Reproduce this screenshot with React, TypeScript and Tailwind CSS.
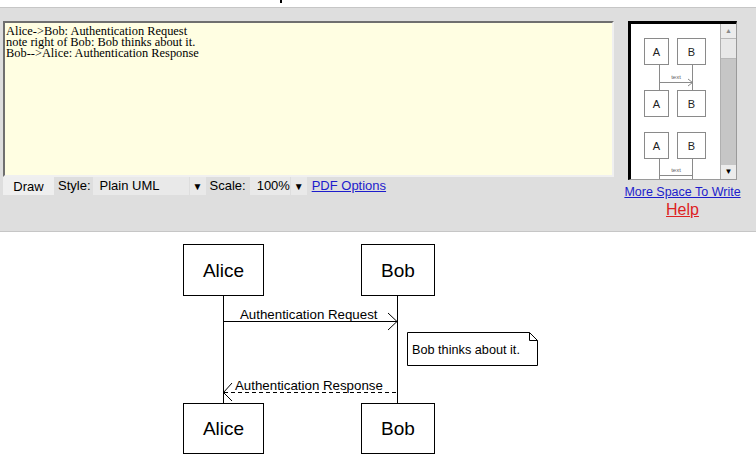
import React from 'react';

const source = `Alice->Bob: Authentication Request
note right of Bob: Bob thinks about it.
Bob-->Alice: Authentication Response`;

const Thumbnail: React.FC = () => (
    <svg width="88" height="156" viewBox="0 0 88 156" className="block">
        <rect x="0" y="0" width="88" height="156" fill="#ffffff"/>
        <g stroke="#8a8a8a" strokeWidth="1" fill="#ffffff">
            <rect x="13.5" y="14.5" width="24" height="26"/>
            <rect x="46.5" y="14.5" width="28" height="26"/>
            <line x1="28.5" y1="40" x2="28.5" y2="66"/>
            <line x1="61.5" y1="40" x2="61.5" y2="66"/>
            <line x1="28.5" y1="58.5" x2="61.5" y2="58.5"/>
            <polyline points="57,55 61.5,58.5 57,62" fill="none"/>
            <rect x="13.5" y="66.5" width="24" height="26"/>
            <rect x="46.5" y="66.5" width="28" height="26"/>
            <rect x="13.5" y="108.5" width="24" height="26"/>
            <rect x="46.5" y="108.5" width="28" height="26"/>
            <line x1="28.5" y1="134" x2="28.5" y2="156"/>
            <line x1="61.5" y1="134" x2="61.5" y2="156"/>
            <line x1="28.5" y1="151.5" x2="61.5" y2="151.5"/>
        </g>
        <g fill="#222222" fontFamily="'Liberation Sans', Arial, sans-serif" fontSize="11" textAnchor="middle">
            <text x="25.5" y="32">A</text>
            <text x="60.5" y="32">B</text>
            <text x="25.5" y="84">A</text>
            <text x="60.5" y="84">B</text>
            <text x="25.5" y="126">A</text>
            <text x="60.5" y="126">B</text>
        </g>
        <g fill="#666666" fontFamily="'Liberation Sans', Arial, sans-serif" fontSize="6" textAnchor="middle">
            <text x="45" y="55">text</text>
            <text x="45" y="148">text</text>
        </g>
    </svg>
);

const Diagram: React.FC = () => (
    <svg width="756" height="230" viewBox="0 232 756 230" className="block">
        <g stroke="#000000" strokeWidth="1" fill="#ffffff">
            <line x1="223.5" y1="295" x2="223.5" y2="403"/>
            <line x1="397.5" y1="295" x2="397.5" y2="403"/>
            <rect x="183.5" y="244.5" width="80" height="51"/>
            <rect x="361.5" y="244.5" width="73" height="51"/>
            <rect x="183.5" y="403.5" width="80" height="50"/>
            <rect x="361.5" y="403.5" width="73" height="50"/>
            <line x1="223.5" y1="321.5" x2="397" y2="321.5"/>
            <polyline points="388,313 397,321.5 388,330" fill="none"/>
            <line x1="224" y1="392.5" x2="397" y2="392.5" strokeDasharray="4 3"/>
            <polyline points="232,383 223.5,392.5 232,401" fill="none"/>
            <path d="M407.5 332.5 H529.5 L537.5 340.5 V365.5 H407.5 Z"/>
            <path d="M529.5 332.5 V340.5 H537.5" fill="none"/>
        </g>
        <g fill="#000000" fontFamily="'Liberation Sans', Arial, sans-serif">
            <text x="223.5" y="277" fontSize="19" textAnchor="middle">Alice</text>
            <text x="398" y="277" fontSize="19" textAnchor="middle">Bob</text>
            <text x="223.5" y="435" fontSize="19" textAnchor="middle">Alice</text>
            <text x="398" y="435" fontSize="19" textAnchor="middle">Bob</text>
            <text x="240" y="318.5" fontSize="13.3">Authentication Request</text>
            <text x="412" y="353.5" fontSize="12.7">Bob thinks about it.</text>
            <text x="235" y="389.5" fontSize="13.3">Authentication Response</text>
        </g>
    </svg>
);

const SelectBox: React.FC<{ value: string; width: string }> = ({value, width}) => (
    <div className="flex h-[18px] items-stretch">
        <div className={`${width} bg-[#e9e9e9] pl-[7px] leading-[18px] text-[13px] text-black`}>{value}</div>
        <div className="ml-px flex w-[16px] items-center justify-center bg-[#e9e9e9] text-[10px] text-black">▼</div>
    </div>
);

export default function App() {
    return (
        <div className="h-[462px] w-[756px] overflow-hidden bg-white font-['Liberation_Sans',Arial,sans-serif]">
            <div className="relative h-[7px]">
                <span className="absolute left-[280px] top-0 h-[3px] w-[2px] bg-black"/>
            </div>
            <div className="flex h-[225px] border-y border-[#c6c6c6] bg-[#dedede] pl-[3px] pt-[13px]">
                <div className="flex w-[611px] flex-col">
                    <textarea
                        defaultValue={source}
                        spellCheck={false}
                        className="h-[156px] w-full resize-none border-2 border-t-[#6f6f6f] border-l-[#6f6f6f] border-b-[#f0f0f0] border-r-[#f0f0f0] bg-[#fffee2] px-[1px] pt-[3px] font-['Liberation_Serif','Times_New_Roman',serif] text-[12.4px] leading-[11px] text-black outline-none"
                    />
                    <div className="flex h-[18px] items-center text-[13px] text-black">
                        <button className="h-[18px] w-[51px] bg-[#efefef] text-[13px] text-black">Draw</button>
                        <span className="ml-[4px] mr-[2px]">Style:</span>
                        <SelectBox value="Plain UML" width="w-[96px]"/>
                        <span className="ml-[4px] mr-[4px]">Scale:</span>
                        <SelectBox value="100%" width="w-[40px]"/>
                        <a href="#" className="ml-[5px] text-[13px] text-[#1c1ccc] underline">PDF Options</a>
                    </div>
                </div>
                <div className="ml-[14px] flex w-[109px] flex-col items-center">
                    <div className="flex h-[159px] w-[109px] border-l-[3px] border-t-[3px] border-black border-r border-b border-r-[#9a9a9a] border-b-[#9a9a9a] bg-white">
                        <div className="flex-1 overflow-hidden">
                            <Thumbnail/>
                        </div>
                        <div className="flex w-[16px] flex-col border-l border-[#b0b0b0]">
                            <div className="flex h-[14px] items-center justify-center bg-[#ececec] text-[7px] text-[#8a8a8a]">▲</div>
                            <div className="h-[21px] border-y border-[#b8b8b8] bg-[#e8e8e8]"/>
                            <div className="flex-1 bg-[#c6c6c6]"/>
                            <div className="flex h-[14px] items-center justify-center bg-[#ececec] text-[8px] text-black">▼</div>
                        </div>
                    </div>
                    <a href="#" className="mt-[5px] whitespace-nowrap text-[12.5px] leading-[15px] text-[#1c1ccc] underline">More Space To Write</a>
                    <a href="#" className="mt-[1px] text-[16px] leading-[18px] text-[#dd2222] underline">Help</a>
                </div>
            </div>
            <Diagram/>
        </div>
    );
}
